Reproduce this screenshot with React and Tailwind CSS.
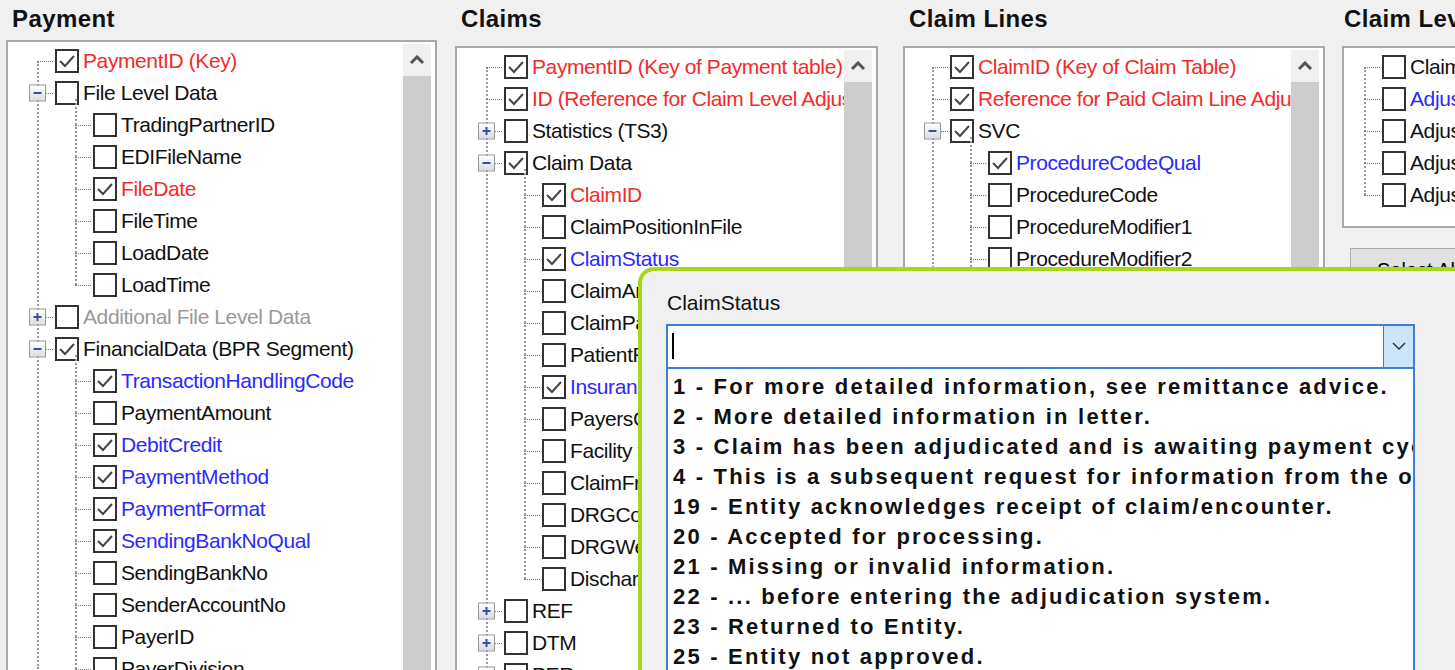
import React from "react";

const R = "text-[#f42a2a]";
const B = "text-[#2a2aff]";
const G = "text-[#9a9a9a]";

const payment = [
  { t: "PaymentID (Key)", c: R, k: 1 },
  { t: "File Level Data", open: 1, ch: [
    { t: "TradingPartnerID" }, { t: "EDIFileName" }, { t: "FileDate", c: R, k: 1 },
    { t: "FileTime" }, { t: "LoadDate" }, { t: "LoadTime" } ] },
  { t: "Additional File Level Data", c: G, closed: 1 },
  { t: "FinancialData (BPR Segment)", open: 1, k: 1, ch: [
    { t: "TransactionHandlingCode", c: B, k: 1 }, { t: "PaymentAmount" },
    { t: "DebitCredit", c: B, k: 1 }, { t: "PaymentMethod", c: B, k: 1 },
    { t: "PaymentFormat", c: B, k: 1 }, { t: "SendingBankNoQual", c: B, k: 1 },
    { t: "SendingBankNo" }, { t: "SenderAccountNo" }, { t: "PayerID" }, { t: "PayerDivision" } ] },
];

const claims = [
  { t: "PaymentID (Key of Payment table)", c: R, k: 1 },
  { t: "ID (Reference for Claim Level Adjustments)", c: R, k: 1 },
  { t: "Statistics (TS3)", closed: 1 },
  { t: "Claim Data", open: 1, k: 1, ch: [
    { t: "ClaimID", c: R, k: 1 }, { t: "ClaimPositionInFile" }, { t: "ClaimStatus", c: B, k: 1 },
    { t: "ClaimAmount" }, { t: "ClaimPayment" }, { t: "PatientResponsibility" },
    { t: "InsurancePlanType", c: B, k: 1 }, { t: "PayersClaimControlNo" },
    { t: "Facility type code" }, { t: "ClaimFrequencyCode" }, { t: "DRGCode" },
    { t: "DRGWeight" }, { t: "DischargeFraction" } ] },
  { t: "REF", closed: 1 }, { t: "DTM", closed: 1 }, { t: "PER", closed: 1 },
];

const lines = [
  { t: "ClaimID (Key of Claim Table)", c: R, k: 1 },
  { t: "Reference for Paid Claim Line Adjustments", c: R, k: 1 },
  { t: "SVC", open: 1, k: 1, ch: [
    { t: "ProcedureCodeQual", c: B, k: 1 }, { t: "ProcedureCode" }, { t: "ProcedureModifier1" },
    { t: "ProcedureModifier2" }, { t: "ProcedureModifier3" }, { t: "ProcedureModifier4" },
    { t: "LineItemChargeAmount" }, { t: "LineItemProviderPayment" }, { t: "RevenueCode" },
    { t: "UnitsOfServicePaid" }, { t: "ServiceQualifier" }, { t: "OriginalUnits" } ] },
];

const level = [
  { t: "ClaimAdjustmentID" }, { t: "AdjustmentGroup", c: B }, { t: "AdjustmentReason" },
  { t: "AdjustmentAmount" }, { t: "AdjustmentQuantity" },
];

function Check({ k }) {
  return (
    <div className="w-[24px] h-[24px] shrink-0 border-2 border-[#333] bg-white flex items-center justify-center">
      {k ? (
        <svg width="18" height="14" viewBox="0 0 18 14"><path d="M2 7 L7 12 L16 2" fill="none" stroke="#444" strokeWidth="2" /></svg>
      ) : null}
    </div>
  );
}

function Exp({ open }) {
  return (
    <div className="absolute left-[8px] top-1/2 -translate-y-1/2 w-[17px] h-[17px] border border-[#9a9a9a] bg-gradient-to-b from-white to-[#dcdcdc] flex items-center justify-center z-10">
      <svg width="11" height="11" viewBox="0 0 11 11">
        <path d="M1.5 5.5 H9.5" stroke="#3a4fa8" strokeWidth="2" />
        {open ? null : <path d="M5.5 1.5 V9.5" stroke="#3a4fa8" strokeWidth="2" />}
      </svg>
    </div>
  );
}

function Row({ n, lvl }) {
  return (
    <div className="flex items-center h-[32px] whitespace-nowrap" style={{ paddingLeft: lvl * 38 }}>
      <div className="relative w-[34px] h-full shrink-0">
        <div className="absolute left-[16px] right-[2px] top-1/2 border-t border-dotted border-[#777]" />
        {n.ch || n.closed ? <Exp open={n.open} /> : null}
      </div>
      <Check k={n.k} />
      <span className={"ml-[4px] text-[21px] tracking-[-0.4px] " + (n.c || "text-[#111]")}>{n.t}</span>
    </div>
  );
}

function Tree({ items, lvl = 0 }) {
  return (
    <div className="relative">
      <div className="absolute top-[16px] bottom-[16px] border-l-2 border-dotted border-[#999]" style={{ left: lvl * 38 + 16 }} />
      {items.map((n, i) => (
        <div key={i}>
          <Row n={n} lvl={lvl} />
          {n.ch ? (
            <div className="relative">
              <div className="absolute -top-[10px] bottom-[16px] border-l-2 border-dotted border-[#999]" style={{ left: (lvl + 1) * 38 + 16 }} />
              {n.ch.map((m, j) => <Row key={j} n={m} lvl={lvl + 1} />)}
            </div>
          ) : null}
        </div>
      ))}
    </div>
  );
}

function Panel({ title, items, w, top, pl }) {
  return (
    <div className="flex flex-col shrink-0" style={{ width: w }}>
      <div className="h-[38px] text-[24px] tracking-[0.4px] font-bold text-[#111] pl-[6px] leading-[38px]">{title}</div>
      <div className="flex-1 border-2 border-[#a8a8a8] bg-white flex overflow-hidden" style={{ marginTop: top }}>
        <div className="flex-1 overflow-hidden pt-[3px]" style={{ paddingLeft: pl }}>
          <Tree items={items} />
        </div>
        <div className="w-[28px] mr-[4px] mt-[2px] flex flex-col shrink-0">
          <div className="h-[32px] bg-[#f0f0f0] flex items-center justify-center">
            <svg width="16" height="10" viewBox="0 0 16 10"><path d="M2 8 L8 2 L14 8" fill="none" stroke="#555" strokeWidth="3" /></svg>
          </div>
          <div className="flex-1 bg-[#cdcdcd]" />
        </div>
      </div>
    </div>
  );
}

const options = [
  "1 - For more detailed information, see remittance advice.",
  "2 - More detailed information in letter.",
  "3 - Claim has been adjudicated and is awaiting payment cycle.",
  "4 - This is a subsequent request for information from the original request.",
  "19 - Entity acknowledges receipt of claim/encounter.",
  "20 - Accepted for processing.",
  "21 - Missing or invalid information.",
  "22 - ... before entering the adjudication system.",
  "23 - Returned to Entity.",
  "25 - Entity not approved.",
];

export default function App() {
  return (
    <div className="relative w-[1455px] h-[670px] overflow-hidden bg-[#f0f0f0]" style={{ fontFamily: '"Liberation Sans", Arial, sans-serif' }}>
      <div className="flex h-[700px] pl-[6px]">
        <Panel title="Payment" items={payment} w={431} top={2} pl={13} />
        <div className="w-[18px] shrink-0" />
        <Panel title="Claims" items={claims} w={423} top={8} pl={13} />
        <div className="w-[25px] shrink-0" />
        <Panel title="Claim Lines" items={lines} w={422} top={8} pl={11} />
        <div className="w-[17px] shrink-0" />
        <div className="flex flex-col w-[140px] shrink-0">
          <div className="h-[38px] text-[24px] tracking-[0.4px] font-bold text-[#111] pl-[2px] leading-[38px] whitespace-nowrap">Claim Level Adjustments</div>
          <div className="mt-[8px] h-[182px] border-2 border-[#a8a8a8] bg-white pt-[3px] pl-[4px] overflow-hidden">
            <Tree items={level} />
          </div>
          <div className="mt-[20px] ml-[8px] h-[36px] border border-[#adadad] bg-[#e1e1e1] text-[20px] pl-[26px] pt-[6px] whitespace-nowrap">Select All</div>
          <div className="mt-[10px] ml-[8px] h-[330px] border-2 border-[#a8a8a8] bg-white flex flex-col">
            <div className="h-[130px]" />
            <div className="flex flex-col">
              {["Adj.", "Adj.", "Adj."].map((t, i) => (
                <div key={i} className="h-[32px] flex items-center text-[21px] whitespace-nowrap">
                  <div className="w-[60px] h-[24px] border-r-2 border-[#333] mr-[6px]" />{t}..
                </div>
              ))}
            </div>
            <div className="mt-[18px] h-[30px] bg-[#cdcdcd]" />
          </div>
          <div className="mt-[20px] ml-[8px] h-[36px] border border-[#adadad] bg-[#e1e1e1] text-[20px] pl-[16px] pt-[6px] whitespace-nowrap">Select All</div>
        </div>
      </div>

      <div className="absolute left-[638px] top-[267px] w-[830px] h-[420px] rounded-[16px] border-[4px] border-[#a8d61c] bg-[#f0f0f0]">
        <div className="ml-[25px] mt-[16px] text-[21px] text-[#111]">ClaimStatus</div>
        <div className="ml-[24px] mt-[5px] w-[749px] h-[45px] border-2 border-[#3d7fd3] bg-white flex">
          <div className="flex-1 flex items-center pl-[4px]"><div className="w-[2px] h-[26px] bg-black" /></div>
          <div className="w-[30px] bg-[#cce4f7] border-l border-[#3d7fd3] flex items-center justify-center">
            <svg width="16" height="10" viewBox="0 0 16 10"><path d="M2 2 L8 8 L14 2" fill="none" stroke="#333" strokeWidth="1.5" /></svg>
          </div>
        </div>
        <div className="ml-[24px] w-[749px] h-[320px] border-2 border-t-0 border-[#3d7fd3] bg-white overflow-hidden pt-[3px] pl-[5px]">
          {options.map((o, i) => (
            <div key={i} className="h-[30px] leading-[30px] text-[22px] tracking-[2.2px] font-bold text-[#111] whitespace-nowrap">{o}</div>
          ))}
        </div>
      </div>
    </div>
  );
}
